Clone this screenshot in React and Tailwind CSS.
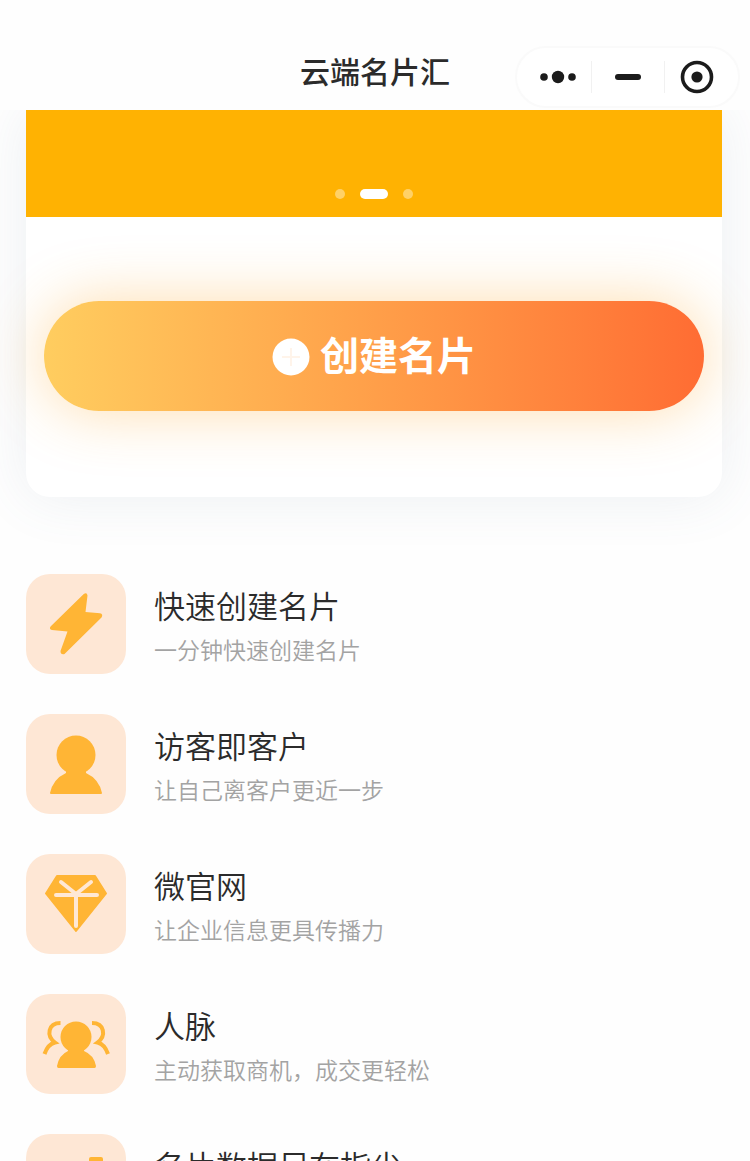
import React from 'react';

function BoltIcon() {
  return (
    <svg viewBox="0 0 100 100" className="w-full h-full" fill="#ffb535" aria-hidden="true">
      <path d="M57.5 20.2 L24.8 52.2 Q22.5 55 26 56 L41.5 57.5 L34.5 77 Q34.5 81 38.5 80 L75.5 43.5 Q77.5 40 74 39.2 L59.5 38 L61.5 21.5 Q61 18 57.5 20.2 Z" />
    </svg>
  );
}

function UserIcon() {
  return (
    <svg viewBox="0 0 100 100" className="w-full h-full" fill="#ffb535" aria-hidden="true">
      <circle cx="50" cy="41" r="19.5" />
      <path d="M40 56 H60 V59 Q73 65 76 79 Q76 80 75 80 H25 Q24 80 24 79 Q27 65 40 59 Z" />
    </svg>
  );
}

function GemIcon() {
  return (
    <svg viewBox="0 0 100 100" className="w-full h-full" aria-hidden="true">
      <path
        d="M31 22 H69 L80 39.5 L50 77 L20 39.5 Z"
        fill="#ffb535"
        stroke="#ffb535"
        strokeWidth="2"
        strokeLinejoin="round"
      />
      <path
        d="M35 28 L50 40 L65 28 M30 41 H71 M50 41 V72"
        fill="none"
        stroke="#ffe8d5"
        strokeWidth="4"
        strokeLinecap="round"
      />
    </svg>
  );
}

function PeopleIcon() {
  return (
    <svg viewBox="0 0 100 100" className="w-full h-full" fill="#ffb535" aria-hidden="true">
      <circle cx="50" cy="43" r="15.5" />
      <path d="M42 54 H58 V57 Q68 61 70 72 Q70 74 68.5 74 H32.500 Q31 74 31 72 Q33 61 42 57 Z" />
      <path
        d="M34.500 29 C22 29 20 42 29 48.500 C23 50 20.500 54 18.500 60 M66 29 C78.500 29 80.500 42 71.500 48.500 C77.500 50 80 54 82 60"
        fill="none"
        stroke="#ffb535"
        strokeWidth="4"
      />
    </svg>
  );
}

function ChartIcon() {
  return (
    <svg viewBox="0 0 100 100" className="w-full h-full" fill="#ffb535" aria-hidden="true">
      <rect x="24" y="50" width="13" height="28" rx="2" />
      <rect x="43" y="37" width="13" height="41" rx="2" />
      <rect x="63" y="23" width="14" height="55" rx="2" />
    </svg>
  );
}

const features = [
  { icon: BoltIcon, title: '快速创建名片', desc: '一分钟快速创建名片' },
  { icon: UserIcon, title: '访客即客户', desc: '让自己离客户更近一步' },
  { icon: GemIcon, title: '微官网', desc: '让企业信息更具传播力' },
  { icon: PeopleIcon, title: '人脉', desc: '主动获取商机，成交更轻松' },
  { icon: ChartIcon, title: '名片数据尽在指尖' },
];

function Capsule() {
  return (
    <div className="flex items-center justify-self-end w-[225px] h-[62px] mr-[10px] rounded-full border-2 border-[#fafafa] bg-white text-[#1b1b1b]">
      <button type="button" aria-label="更多" className="flex flex-1 h-full items-center justify-center pl-2">
        <svg viewBox="0 0 36 14" className="w-9 h-[14px]" fill="currentColor">
          <circle cx="4" cy="7" r="3.8" />
          <circle cx="18" cy="7" r="6.2" />
          <circle cx="32" cy="7" r="3.8" />
        </svg>
      </button>
      <span className="w-px h-8 bg-[#f1f1f1]" />
      <button type="button" aria-label="最小化" className="flex w-[72px] h-full items-center justify-center">
        <span className="w-[26px] h-[6px] rounded-full bg-[#1b1b1b]" />
      </button>
      <span className="w-px h-8 bg-[#f1f1f1]" />
      <button type="button" aria-label="关闭" className="flex flex-1 h-full items-center justify-center pr-2">
        <svg viewBox="0 0 34 34" className="w-[34px] h-[34px]" fill="currentColor">
          <circle cx="17" cy="17" r="14.5" fill="none" stroke="currentColor" strokeWidth="3.6" />
          <circle cx="17" cy="17" r="5.6" />
        </svg>
      </button>
    </div>
  );
}

export default function App() {
  return (
    <div className="flex flex-col h-screen overflow-hidden bg-[#fefefe] font-['Liberation_Sans','Noto_Sans_CJK_SC',sans-serif]">
      {/* Nav bar */}
      <header className="relative z-10 shrink-0 grid grid-cols-[1fr_auto_1fr] items-start h-[110px] pt-[46px] bg-[#fefefe]">
        <span />
        <h1 className="text-[30px] leading-[54px] font-medium text-[#2b2b2b]">云端名片汇</h1>
        <Capsule />
      </header>

      <main className="flex-1 min-h-0 overflow-hidden">
        {/* Card with banner */}
        <section className="ml-[26px] mr-7 rounded-b-3xl bg-white shadow-[0_0_56px_rgba(90,120,150,0.11)]">
          <div className="flex items-end justify-center gap-[15px] h-[107px] pb-[18px] bg-[#ffb202]">
            <span className="w-[10px] h-[10px] rounded-full bg-white/40" />
            <span className="w-7 h-[10px] rounded-full bg-white" />
            <span className="w-[10px] h-[10px] rounded-full bg-white/40" />
          </div>
          <div className="px-[18px] pt-[84px] pb-[86px]">
            <button
              type="button"
              className="flex w-full h-[110px] items-center justify-center gap-[10px] pt-[2px] rounded-full bg-linear-to-r from-[#ffcd5f] to-[#ff6c33] text-[39px] font-bold text-white shadow-[0_0_60px_rgba(255,165,40,0.38)]"
            >
              <svg viewBox="0 0 38 38" className="w-[38px] h-[38px]" aria-hidden="true">
                <circle cx="19" cy="19" r="18.5" fill="#fff" />
                <path d="M10 19 H28 M19 10 V28" stroke="#fff4ea" strokeWidth="2" />
              </svg>
              创建名片
            </button>
          </div>
        </section>

        {/* Feature list */}
        <ul className="flex flex-col gap-10 pt-[77px] px-[26px]">
          {features.map(({ icon: Icon, title, desc }) => (
            <li key={title} className="flex gap-7">
              <div className="shrink-0 w-[100px] h-[100px] rounded-3xl bg-[#fee7d5]">
                <Icon />
              </div>
              <div className="pt-3">
                <h2 className="text-[31px] leading-[44px] font-[350] text-[#2b2b2b]">{title}</h2>
                {desc && <p className="text-[23px] leading-[42px] font-[350] text-[#a3a3a3]">{desc}</p>}
              </div>
            </li>
          ))}
        </ul>
      </main>
    </div>
  );
}
